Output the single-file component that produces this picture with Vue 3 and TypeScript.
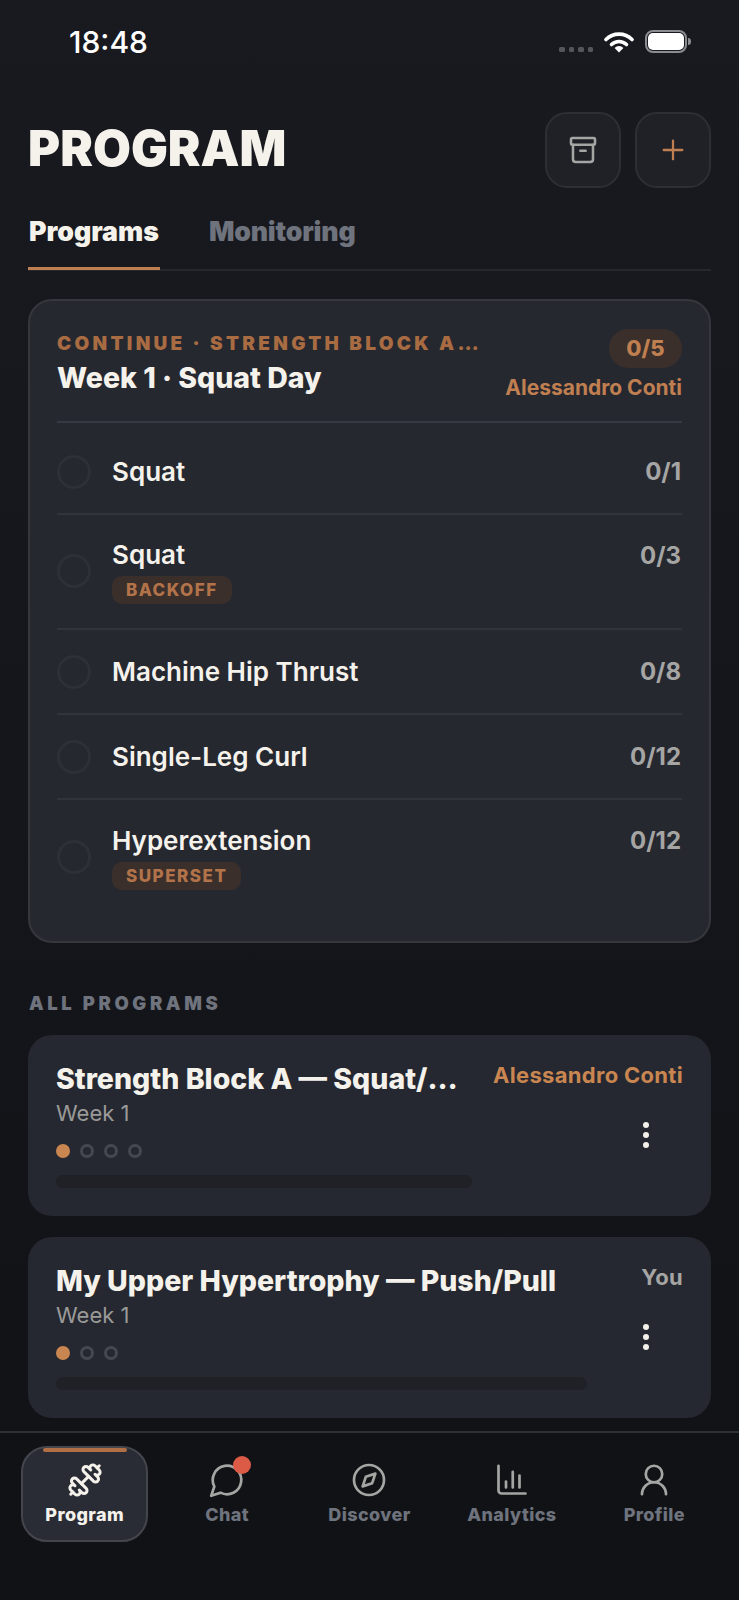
<script setup lang="ts">
type Exercise = { name: string; count: string; tag?: string };

const exercises: Exercise[] = [
  { name: "Squat", count: "0/1" },
  { name: "Squat", count: "0/3", tag: "BACKOFF" },
  { name: "Machine Hip Thrust", count: "0/8" },
  { name: "Single-Leg Curl", count: "0/12" },
  { name: "Hyperextension", count: "0/12", tag: "SUPERSET" },
];

const programs = [
  { title: "Strength Block A — Squat/Deadlift", author: "Alessandro Conti", mine: false, weeks: 4, bar: 416 },
  { title: "My Upper Hypertrophy — Push/Pull", author: "You", mine: true, weeks: 3, bar: 531 },
];

const tabs = ["Program", "Chat", "Discover", "Analytics", "Profile"];
</script>

<template>
  <div class="screen">
    <div class="status">
      <span class="time">18:48</span>
      <div class="status-icons">
        <div class="signal"><i></i><i></i><i></i><i></i></div>
        <svg class="wifi" width="30" height="22" viewBox="0 0 30 22">
          <path d="M2 8.5a18.5 18.5 0 0 1 26 0" fill="none" stroke="#fff" stroke-width="3.6" stroke-linecap="round" />
          <path d="M7.5 13.6a10.6 10.6 0 0 1 15 0" fill="none" stroke="#fff" stroke-width="3.6" stroke-linecap="round" />
          <path d="M15 21.5l-4.4-4.6a6.2 6.2 0 0 1 8.8 0z" fill="#fff" />
        </svg>
        <div class="battery"><div class="battery-fill"></div></div>
      </div>
    </div>

    <header class="head">
      <h1>PROGRAM</h1>
      <div class="head-actions">
        <button class="icon-btn">
          <svg width="32" height="32" viewBox="0 0 24 24" fill="none" stroke="#a5a5a3" stroke-width="1.9" stroke-linecap="round" stroke-linejoin="round">
            <rect x="3" y="3" width="18" height="5" rx="1" />
            <path d="M4.5 8v11a2 2 0 0 0 2 2h11a2 2 0 0 0 2-2V8" />
            <path d="M10 12.5h4" />
          </svg>
        </button>
        <button class="icon-btn">
          <svg width="32" height="32" viewBox="0 0 24 24" fill="none" stroke="#c07f50" stroke-width="1.7" stroke-linecap="round">
            <path d="M12 5v14M5 12h14" />
          </svg>
        </button>
      </div>
    </header>

    <nav class="subtabs">
      <span class="subtab active">Programs</span>
      <span class="subtab">Monitoring</span>
    </nav>

    <main class="content">
      <section class="today">
        <div class="today-head">
          <div class="today-copy">
            <div class="eyebrow">CONTINUE · STRENGTH BLOCK A…</div>
            <div class="today-title">Week 1 · Squat Day</div>
          </div>
          <div class="today-side">
            <span class="today-pill">0/5</span>
            <span class="coach">Alessandro Conti</span>
          </div>
        </div>
        <div class="rows">
          <div v-for="(item, i) in exercises" :key="i" class="row" :class="{ tagged: item.tag }">
            <span class="check"></span>
            <div class="row-body">
              <div class="row-name">{{ item.name }}</div>
              <span v-if="item.tag" class="tag">{{ item.tag }}</span>
            </div>
            <span class="row-count">{{ item.count }}</span>
          </div>
        </div>
      </section>

      <div class="section-label">ALL PROGRAMS</div>

      <section v-for="p in programs" :key="p.title" class="program">
        <div class="program-main">
          <div class="program-title">{{ p.title }}</div>
          <div class="program-week">Week 1</div>
          <div class="dots">
            <span v-for="n in p.weeks" :key="n" class="dot" :class="{ on: n === 1 }"></span>
          </div>
          <div class="track" :style="{ width: p.bar + 'px' }"></div>
        </div>
        <div class="program-side">
          <span class="author" :class="{ mine: p.mine }">{{ p.author }}</span>
          <div class="kebab"><i></i><i></i><i></i></div>
        </div>
      </section>
    </main>

    <footer class="tabbar">
      <div v-for="(t, i) in tabs" :key="t" class="tab" :class="{ active: i === 0 }">
        <span v-if="i === 0" class="tab-mark"></span>
        <div class="tab-icon">
          <svg v-if="i === 0" class="dumbbell" width="36" height="36" viewBox="0 0 24 24" fill="none" stroke="#f5f2ec" stroke-width="2" stroke-linecap="round" stroke-linejoin="round">
            <path d="M14.4 14.4 9.6 9.6" />
            <path d="M18.657 21.485a2 2 0 1 1-2.829-2.828l-1.767 1.768a2 2 0 1 1-2.829-2.829l6.364-6.364a2 2 0 1 1 2.829 2.829l-1.768 1.767a2 2 0 1 1 2.828 2.829z" />
            <path d="m21.5 21.5-1.4-1.4" />
            <path d="M3.9 3.9 2.5 2.5" />
            <path d="M6.404 12.768a2 2 0 1 1-2.829-2.829l1.768-1.767a2 2 0 1 1-2.828-2.829l2.828-2.828a2 2 0 1 1 2.829 2.828l1.767-1.768a2 2 0 1 1 2.829 2.829z" />
          </svg>
          <svg v-else-if="i === 1" width="38" height="38" viewBox="0 0 24 24" fill="none" stroke="#a5a5a3" stroke-width="1.7" stroke-linecap="round" stroke-linejoin="round">
            <path d="M7.9 20A9 9 0 1 0 4 16.1L2 22Z" />
          </svg>
          <svg v-else-if="i === 2" width="36" height="36" viewBox="0 0 24 24" fill="none" stroke="#a5a5a3" stroke-width="1.8" stroke-linecap="round" stroke-linejoin="round">
            <circle cx="12" cy="12" r="10" />
            <path d="m16.24 7.76-2.12 6.36-6.36 2.12 2.12-6.36 6.36-2.12z" />
          </svg>
          <svg v-else-if="i === 3" width="36" height="36" viewBox="0 0 24 24" fill="none" stroke="#a5a5a3" stroke-width="1.8" stroke-linecap="round" stroke-linejoin="round">
            <path d="M3 2.5V19a2 2 0 0 0 2 2h16" />
            <path d="M8 17v-4M12.5 17V6.5M17 17V9" />
          </svg>
          <svg v-else width="36" height="36" viewBox="0 0 24 24" fill="none" stroke="#a5a5a3" stroke-width="1.8" stroke-linecap="round" stroke-linejoin="round">
            <circle cx="12" cy="8" r="5.5" />
            <path d="M20 21.5a8 8 0 0 0-16 0" />
          </svg>
          <span v-if="i === 1" class="badge"></span>
        </div>
        <span class="tab-label">{{ t }}</span>
      </div>
    </footer>
  </div>
</template>

<style>
body {
  background: #111216;
}
</style>

<style scoped>
.screen {
  width: 739px;
  height: 1600px;
  display: flex;
  flex-direction: column;
  overflow: hidden;
  background: linear-gradient(180deg, #191a20 0%, #111216 100%);
  font-family: Inter, "Liberation Sans", sans-serif;
  color: #f5f2ec;
}

.status {
  height: 84px;
  flex: none;
  padding: 28px 52px 0 69px;
  box-sizing: border-box;
  display: flex;
  justify-content: space-between;
  align-items: flex-start;
}
.time {
  font-size: 30px;
  line-height: 28px;
  font-weight: 500;
  color: #fff;
}
.status-icons {
  display: flex;
  align-items: center;
  gap: 11px;
  margin-top: 2px;
}
.signal {
  display: flex;
  gap: 4px;
  margin-top: 16px;
}
.signal i {
  width: 5.5px;
  height: 5.5px;
  border-radius: 1.5px;
  background: #55565b;
}
.battery {
  width: 42px;
  height: 23px;
  border: 2px solid #8b8c90;
  border-radius: 8px;
  box-sizing: border-box;
  padding: 1px;
  position: relative;
}
.battery::after {
  content: "";
  position: absolute;
  right: -6px;
  top: 6px;
  width: 3px;
  height: 7px;
  border-radius: 0 3px 3px 0;
  background: #8b8c90;
}
.battery-fill {
  height: 100%;
  border-radius: 5px;
  background: #fff;
}

.head {
  flex: none;
  display: flex;
  justify-content: space-between;
  align-items: flex-start;
  padding: 28px 28px 0 28px;
  height: 124px;
  box-sizing: border-box;
}
h1 {
  margin: 8px 0 0;
  font-size: 49px;
  line-height: 58px;
  font-weight: 900;
  letter-spacing: 0;
  color: #f5f2ec;
}
.head-actions {
  display: flex;
  gap: 14px;
}
.icon-btn {
  width: 76px;
  height: 76px;
  padding: 0;
  border: 2px solid #2d2f36;
  border-radius: 22px;
  background: #1f2127;
  display: flex;
  align-items: center;
  justify-content: center;
}

.subtabs {
  flex: none;
  margin: 0 28px;
  height: 63px;
  box-sizing: border-box;
  display: flex;
  gap: 48px;
  border-bottom: 2px solid #26282e;
}
.subtab {
  font-size: 26.7px;
  line-height: 32px;
  font-weight: 900;
  letter-spacing: -0.2px;
  color: #6e737d;
  padding: 7px 1px 0;
  height: 62px;
  box-sizing: border-box;
}
.subtab.active {
  color: #f5f2ec;
  letter-spacing: 0;
  border-bottom: 3px solid #c07f50;
}

.content {
  flex: 1;
  min-height: 0;
  padding: 28px 28px 0;
}

.today {
  height: 644px;
  box-sizing: border-box;
  padding: 28px 27px 0;
  border: 2px solid #35373d;
  border-radius: 24px;
  background: #262830;
}
.today-head {
  display: flex;
  justify-content: space-between;
  height: 94px;
  box-sizing: border-box;
  border-bottom: 2px solid #363941;
}
.eyebrow {
  margin-top: 3px;
  font-size: 19px;
  line-height: 24px;
  font-weight: 900;
  letter-spacing: 3.3px;
  color: #a96c42;
}
.today-title {
  margin-top: 5px;
  font-size: 28.5px;
  line-height: 34px;
  font-weight: 800;
  color: #f5f2ec;
}
.today-side {
  display: flex;
  flex-direction: column;
  align-items: flex-end;
}
.today-pill {
  width: 73px;
  height: 39px;
  border-radius: 20px;
  background: #3a2f2b;
  color: #c07f50;
  font-size: 22px;
  line-height: 39px;
  font-weight: 800;
  text-align: center;
}
.coach {
  margin-top: 8px;
  font-size: 21px;
  line-height: 24px;
  font-weight: 700;
  color: #c07f50;
}

.row {
  display: flex;
  align-items: center;
  gap: 21px;
  height: 85px;
  border-bottom: 2px solid #31343b;
  box-sizing: border-box;
  position: relative;
}
.row:first-child {
  height: 92px;
  padding-top: 7px;
}
.row.tagged {
  height: 115px;
  padding-bottom: 2px;
}
.row:last-child {
  border-bottom: 0;
}
.check {
  flex: none;
  width: 34px;
  height: 34px;
  box-sizing: border-box;
  border: 3px solid #2d3037;
  border-radius: 50%;
}
.row-body {
  flex: 1;
  min-width: 0;
}
.row-name {
  font-size: 26px;
  line-height: 34px;
  font-weight: 600;
  color: #f5f2ec;
}
.tag {
  display: block;
  width: fit-content;
  margin-top: 4px;
  padding: 0 14px;
  height: 28px;
  border-radius: 10px;
  background: #3a2f2b;
  color: #b2734a;
  font-size: 17px;
  line-height: 28px;
  font-weight: 800;
  letter-spacing: 1.5px;
}
.row-count {
  padding-right: 1px;
  font-size: 24px;
  line-height: 34px;
  font-weight: 700;
  color: #a5a5a3;
}
.tagged .row-count {
  align-self: flex-start;
  margin-top: 24px;
}

.section-label {
  margin: 48px 0 0 1px;
  font-size: 18.5px;
  line-height: 24px;
  font-weight: 900;
  letter-spacing: 3.6px;
  color: #6e737d;
}

.program {
  margin-top: 21px;
  height: 181px;
  box-sizing: border-box;
  padding: 27px 28px 0;
  border-radius: 24px;
  background: #252830;
  display: flex;
  justify-content: space-between;
  gap: 22px;
}
.section-label + .program {
  margin-top: 20px;
}
.program-main {
  min-width: 0;
  flex: 1;
}
.program-title {
  font-size: 28.5px;
  line-height: 34px;
  font-weight: 800;
  color: #f5f2ec;
  white-space: nowrap;
  overflow: hidden;
  text-overflow: ellipsis;
}
.program-week {
  margin-top: 2px;
  font-size: 22px;
  line-height: 30px;
  color: #9a9a98;
}
.dots {
  display: flex;
  gap: 10px;
  margin-top: 16px;
}
.dot {
  width: 14px;
  height: 14px;
  box-sizing: border-box;
  border: 3px solid #454852;
  border-radius: 50%;
}
.dot.on {
  background: #c98650;
  border-color: #c98650;
}
.track {
  height: 13px;
  margin-top: 17px;
  border-radius: 7px;
  background: #1f2127;
}
.program-side {
  flex: none;
  display: flex;
  flex-direction: column;
  align-items: flex-end;
}
.author {
  font-size: 22px;
  line-height: 26px;
  font-weight: 700;
  letter-spacing: 0.3px;
  color: #c98650;
}
.author.mine {
  color: #a5a5a3;
}
.kebab {
  display: flex;
  flex-direction: column;
  gap: 4px;
  margin: 34px 34px 0 0;
}
.kebab i {
  width: 6px;
  height: 6px;
  border-radius: 50%;
  background: #f5f2ec;
}

.tabbar {
  flex: none;
  height: 169px;
  box-sizing: border-box;
  border-top: 2px solid #2f3138;
  background: #111216;
  padding: 13px 21px 0;
  display: grid;
  grid-template-columns: repeat(5, 1fr);
  column-gap: 15px;
  align-items: start;
}
.tab {
  height: 96px;
  box-sizing: border-box;
  border: 2px solid transparent;
  border-radius: 26px;
  display: flex;
  flex-direction: column;
  align-items: center;
  position: relative;
  padding-top: 13px;
}
.tab.active {
  background: #2a2c35;
  border-color: #44464e;
}
.tab-mark {
  position: absolute;
  top: 0;
  left: 20px;
  width: 84px;
  height: 4px;
  border-radius: 2px;
  background: #b06f45;
}
.tab-icon {
  position: relative;
  height: 38px;
  display: flex;
  align-items: center;
  justify-content: center;
}
.dumbbell {
  transform: scaleX(-1);
}
.badge {
  position: absolute;
  top: -5px;
  right: -5px;
  width: 18px;
  height: 18px;
  border-radius: 50%;
  background: #dc5b47;
}
.tab-label {
  margin-top: 5px;
  font-size: 18px;
  line-height: 22px;
  font-weight: 800;
  letter-spacing: 0.4px;
  color: #6e737d;
}
.tab.active .tab-label {
  color: #f5f2ec;
}
</style>
